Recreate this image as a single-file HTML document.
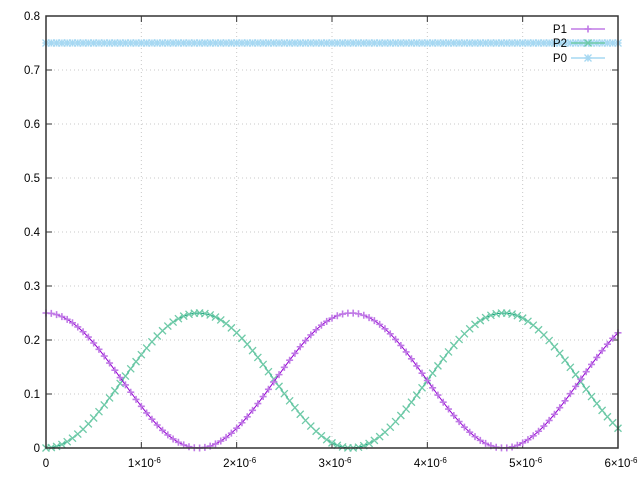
<!DOCTYPE html>
<html><head><meta charset="utf-8"><style>
body{margin:0;background:#fff}
svg{display:block;font-family:"Liberation Sans",sans-serif;font-size:11.5px}
</style></head><body>
<svg id="s" width="640" height="478" xmlns="http://www.w3.org/2000/svg"></svg>
<script>
const L=46,R=618,T=16,B=448;
const X=t=>L+(t/6e-6)*(R-L), Y=v=>B-(v/0.8)*(B-T);
let h='';
for(let i=1;i<8;i++){let y=Y(i/10);h+=`<line x1="${L}" y1="${y}" x2="${R}" y2="${y}" stroke="#c8c8c8" stroke-dasharray="1,3"/>`;}
for(let i=1;i<6;i++){let x=X(i*1e-6);h+=`<line x1="${x}" y1="${T}" x2="${x}" y2="${B}" stroke="#c8c8c8" stroke-dasharray="1,3"/>`;}
for(let i=0;i<=8;i++){let y=Y(i/10);h+=`<line x1="${L}" y1="${y}" x2="${L+6}" y2="${y}" stroke="#333"/><line x1="${R}" y1="${y}" x2="${R-6}" y2="${y}" stroke="#333"/>`;
h+=`<text x="40" y="${y+4}" text-anchor="end">${i==0?'0':(i/10).toFixed(1)}</text>`;}
for(let i=0;i<=6;i++){let x=X(i*1e-6);h+=`<line x1="${x}" y1="${B}" x2="${x}" y2="${B-6}" stroke="#333"/><line x1="${x}" y1="${T}" x2="${x}" y2="${T+6}" stroke="#333"/>`;
if(i==0)h+=`<text x="${x}" y="467" text-anchor="middle">0</text>`;
else h+=`<text x="${x+3}" y="467" text-anchor="middle">${i}×10<tspan dy="-4" font-size="8">-6</tspan></text>`;}
const N=108;let p1=[],p2=[],p0=[];
for(let k=0;k<=N;k++){let t=6e-6*k/N;let a=0.125*(1+Math.cos(2*Math.PI*t/3.2e-6));p1.push([X(t),Y(a)]);p2.push([X(t),Y(0.25-a)]);p0.push([X(t),Y(0.75)]);}
const line=(p,c)=>`<polyline fill="none" stroke="${c}" stroke-width="1" points="${p.map(q=>q.join(',')).join(' ')}"/>`;
const plus=(x,y,c)=>`<path d="M${x-3.5},${y}h7M${x},${y-3.5}v7" stroke="${c}" stroke-width="1.6"/>`;
const cross=(x,y,c)=>`<path d="M${x-3.5},${y-3.5}l7,7M${x-3.5},${y+3.5}l7,-7" stroke="${c}" stroke-width="1.3"/>`;
const star=(x,y,c)=>plus(x,y,c)+cross(x,y,c);
h+=line(p0,'#56b4e9');p0.forEach(q=>h+=star(q[0],q[1],'#a6d8f2'));
h+=line(p2,'#009e73');p2.forEach(q=>h+=cross(q[0],q[1],'#6fcaa8'));
h+=line(p1,'#9400d3');p1.forEach(q=>h+=plus(q[0],q[1],'#c07ae6'));
h+=`<rect x="${L}" y="${T}" width="${R-L}" height="${B-T}" fill="none" stroke="#333" stroke-width="1.5"/>`;
[['P1','#c07ae6',29,plus],['P2','#6fcaa8',43,cross],['P0','#a6d8f2',58,star]].forEach(([n,c,y,f])=>{
h+=`<text x="567" y="${y+4}" text-anchor="end">${n}</text><line x1="571" y1="${y}" x2="605" y2="${y}" stroke="${c}" stroke-width="1.5"/>`+f(588,y,c);});
document.getElementById('s').innerHTML=h;
</script>
</body></html>
